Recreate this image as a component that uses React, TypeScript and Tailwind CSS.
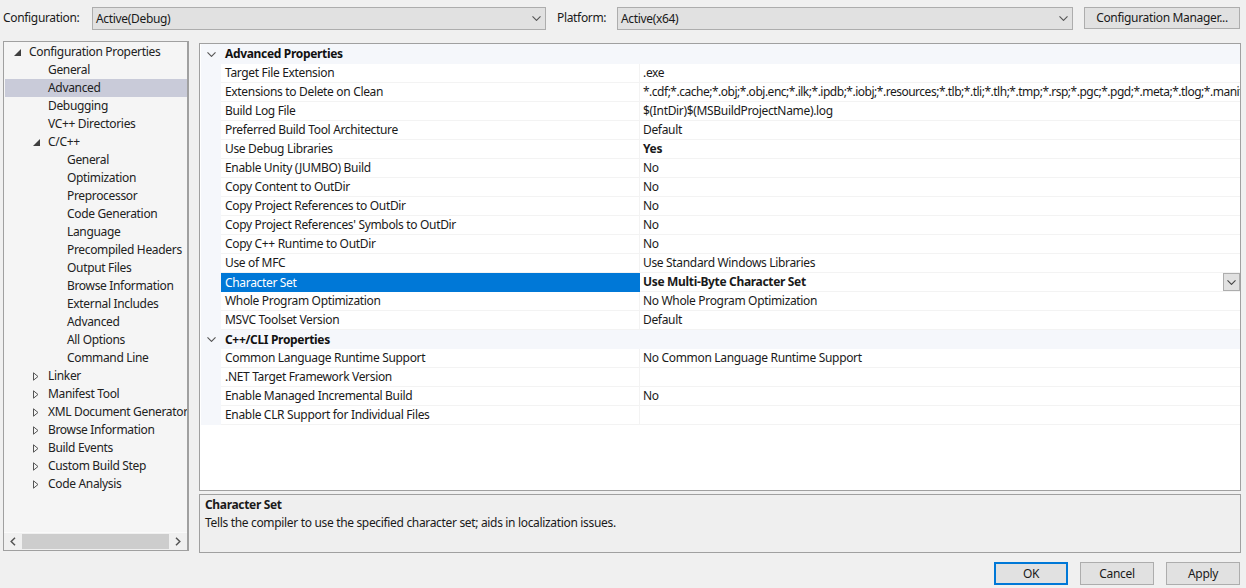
const font = "[font-family:'Noto_Sans',sans-serif]";

type TreeItem = { label: string; level: number; arrow?: "open" | "closed"; selected?: boolean };

const tree: TreeItem[] = [
  { label: "Configuration Properties", level: 0, arrow: "open" },
  { label: "General", level: 1 },
  { label: "Advanced", level: 1, selected: true },
  { label: "Debugging", level: 1 },
  { label: "VC++ Directories", level: 1 },
  { label: "C/C++", level: 1, arrow: "open" },
  { label: "General", level: 2 },
  { label: "Optimization", level: 2 },
  { label: "Preprocessor", level: 2 },
  { label: "Code Generation", level: 2 },
  { label: "Language", level: 2 },
  { label: "Precompiled Headers", level: 2 },
  { label: "Output Files", level: 2 },
  { label: "Browse Information", level: 2 },
  { label: "External Includes", level: 2 },
  { label: "Advanced", level: 2 },
  { label: "All Options", level: 2 },
  { label: "Command Line", level: 2 },
  { label: "Linker", level: 1, arrow: "closed" },
  { label: "Manifest Tool", level: 1, arrow: "closed" },
  { label: "XML Document Generator", level: 1, arrow: "closed" },
  { label: "Browse Information", level: 1, arrow: "closed" },
  { label: "Build Events", level: 1, arrow: "closed" },
  { label: "Custom Build Step", level: 1, arrow: "closed" },
  { label: "Code Analysis", level: 1, arrow: "closed" },
];

const extensions =
  "*.cdf;*.cache;*.obj;*.obj.enc;*.ilk;*.ipdb;*.iobj;*.resources;*.tlb;*.tli;*.tlh;*.tmp;*.rsp;*.pgc;*.pgd;*.meta;*.tlog;*.manifest;*.res;*.pch;*.exp;*.idb";

const advanced: [string, string, boolean?][] = [
  ["Target File Extension", ".exe"],
  ["Extensions to Delete on Clean", extensions],
  ["Build Log File", "$(IntDir)$(MSBuildProjectName).log"],
  ["Preferred Build Tool Architecture", "Default"],
  ["Use Debug Libraries", "Yes", true],
  ["Enable Unity (JUMBO) Build", "No"],
  ["Copy Content to OutDir", "No"],
  ["Copy Project References to OutDir", "No"],
  ["Copy Project References' Symbols to OutDir", "No"],
  ["Copy C++ Runtime to OutDir", "No"],
  ["Use of MFC", "Use Standard Windows Libraries"],
];

const advancedEnd: [string, string][] = [
  ["Whole Program Optimization", "No Whole Program Optimization"],
  ["MSVC Toolset Version", "Default"],
];

const cli: [string, string][] = [
  ["Common Language Runtime Support", "No Common Language Runtime Support"],
  [".NET Target Framework Version", ""],
  ["Enable Managed Incremental Build", "No"],
  ["Enable CLR Support for Individual Files", ""],
];

function Chevron({ className }: { className?: string }) {
  return (
    <svg width="9" height="5" viewBox="0 0 9 5" fill="none" className={className}>
      <path d="M0.5 0.4L4.5 4.4L8.5 0.4" stroke="currentColor" strokeWidth="1.1" />
    </svg>
  );
}

function TreeArrow({ open }: { open: boolean }) {
  return open ? (
    <svg width="7" height="7" viewBox="0 0 7 7">
      <path d="M7 0V7H0Z" fill="#404040" />
    </svg>
  ) : (
    <svg width="6" height="9" viewBox="0 0 6 9" fill="none">
      <path d="M0.5 0.8L5 4.5L0.5 8.2Z" stroke="#555555" />
    </svg>
  );
}

function Combo({ value, width }: { value: string; width: string }) {
  return (
    <div className={`flex h-[23px] items-center justify-between border border-[#adadad] bg-[#e1e1e1] pl-[3px] pr-[4px] ${width}`}>
      <span className="text-[#1a1a1a]">{value}</span>
      <Chevron className="text-[#555555]" />
    </div>
  );
}

function DialogButton({ label, primary }: { label: string; primary?: boolean }) {
  return (
    <div
      className={`flex h-[23px] w-[74px] items-center justify-center bg-[#e1e1e1] text-[#1a1a1a] ${
        primary ? "border-2 border-[#0078d7]" : "border border-[#adadad]"
      }`}
    >
      {label}
    </div>
  );
}

function GroupRow({ label, first }: { label: string; first?: boolean }) {
  return (
    <div className={`flex items-center bg-[#f5f7fb] ${first ? "h-[20px]" : "h-[19px]"}`}>
      <div className="flex w-[20px] justify-center pl-[1px] text-[#555555]">
        <Chevron />
      </div>
      <span className="pl-[4px] font-bold text-[#111111]">{label}</span>
    </div>
  );
}

function PropRow({ label, value, bold }: { label: string; value: string; bold?: boolean }) {
  return (
    <div className="flex h-[19px] bg-[#f5f7fb]">
      <div className="w-[20px] shrink-0" />
      <div className="flex w-[419px] shrink-0 items-center border-b border-r border-[#f3f3f3] bg-white pl-[4px] text-[#1a1a1a]">
        {label}
      </div>
      <div
        className={`flex min-w-0 flex-1 items-center overflow-hidden whitespace-nowrap border-b border-[#f3f3f3] bg-white pl-[3px] text-[#1a1a1a] ${
          bold ? "font-bold" : ""
        } ${value === extensions ? "tracking-[-0.49px]" : ""}`}
      >
        {value}
      </div>
    </div>
  );
}

function SelectedRow() {
  return (
    <div className="flex h-[19px] bg-[#f5f7fb]">
      <div className="w-[20px] shrink-0" />
      <div className="flex w-[419px] shrink-0 items-center bg-[#0078d7] pl-[4px] text-white">Character Set</div>
      <div className="flex flex-1 items-center justify-between border-b border-[#f3f3f3] bg-white pl-[3px] font-bold text-[#1a1a1a]">
        Use Multi-Byte Character Set
        <div className="flex h-[18px] w-[17px] items-center justify-center border border-[#adadad] bg-[#e1e1e1] text-[#444444]">
          <Chevron />
        </div>
      </div>
    </div>
  );
}

export default function App() {
  return (
    <div className={`h-[588px] w-[1246px] overflow-hidden bg-[#f0f0f0] text-[12px] leading-[18px] tracking-[-0.33px] ${font}`}>
      {/* Configuration / platform selectors */}
      <div className="flex items-start pl-[3px] pt-[7px]">
        <span className="flex h-[22px] w-[89px] items-center text-[#1a1a1a]">Configuration:</span>
        <Combo value="Active(Debug)" width="w-[454px]" />
        <span className="ml-[11px] flex h-[22px] w-[60px] items-center text-[#1a1a1a]">Platform:</span>
        <Combo value="Active(x64)" width="w-[456px]" />
        <div className="ml-[11px] flex h-[22px] w-[156px] items-center justify-center border border-[#adadad] bg-[#e1e1e1] text-[#1a1a1a]">
          Configuration Manager...
        </div>
      </div>

      <div className="flex pl-[3px] pt-[11px]">
        {/* Tree */}
        <div className="flex h-[510px] w-[186px] shrink-0 flex-col border border-r-2 border-[#a0a0a0] bg-[#f5f5f5]">
          <div className="min-h-0 flex-1 overflow-hidden pt-[1px]">
            {tree.map((item, i) => (
              <div
                key={i}
                className={`relative ml-[1px] flex h-[18px] items-center whitespace-nowrap text-[#222222] ${
                  item.selected ? "bg-[#c9cbd9]" : ""
                } ${item.level === 0 ? "pl-[24px]" : item.level === 1 ? "pl-[43px]" : "pl-[62px]"}`}
              >
                {item.arrow && (
                  <span
                    className={`absolute top-[5px] flex h-[9px] items-center ${
                      item.level === 0 ? "left-[9px]" : "left-[28px]"
                    }`}
                  >
                    <TreeArrow open={item.arrow === "open"} />
                  </span>
                )}
                {item.label}
              </div>
            ))}
          </div>
          <div className="flex h-[18px] shrink-0 items-center border-t border-[#fafafa] bg-[#f0f0f0] text-[#555555]">
            <div className="flex w-[18px] justify-center">
              <svg width="6" height="9" viewBox="0 0 6 9" fill="none">
                <path d="M5 0.8L1.2 4.5L5 8.2" stroke="currentColor" strokeWidth="1.5" />
              </svg>
            </div>
            <div className="h-[15px] w-[147px] bg-[#cdcdcd]" />
            <div className="flex flex-1 justify-center">
              <svg width="6" height="9" viewBox="0 0 6 9" fill="none">
                <path d="M1 0.8L4.8 4.5L1 8.2" stroke="currentColor" strokeWidth="1.5" />
              </svg>
            </div>
          </div>
        </div>

        <div className="ml-[10px] flex w-[1042px] shrink-0 flex-col pt-[2px]">
          {/* Property grid */}
          <div className="h-[448px] overflow-hidden border border-[#a0a0a0] bg-white pl-[1px]">
            <GroupRow label="Advanced Properties" first />
            {advanced.map(([label, value, bold]) => (
              <PropRow key={label} label={label} value={value} bold={bold} />
            ))}
            <SelectedRow />
            {advancedEnd.map(([label, value]) => (
              <PropRow key={label} label={label} value={value} />
            ))}
            <GroupRow label="C++/CLI Properties" />
            {cli.map(([label, value]) => (
              <PropRow key={label} label={label} value={value} />
            ))}
          </div>

          {/* Description */}
          <div className="mt-[3px] h-[59px] border border-[#a0a0a0] bg-[#efefef] pl-[5px] pt-[1px] text-[#1a1a1a]">
            <div className="font-bold">Character Set</div>
            <div>Tells the compiler to use the specified character set; aids in localization issues.</div>
          </div>
        </div>
      </div>

      {/* Dialog buttons */}
      <div className="flex justify-end gap-[12px] pr-[6px] pt-[9px]">
        <DialogButton label="OK" primary />
        <DialogButton label="Cancel" />
        <DialogButton label="Apply" />
      </div>
    </div>
  );
}
